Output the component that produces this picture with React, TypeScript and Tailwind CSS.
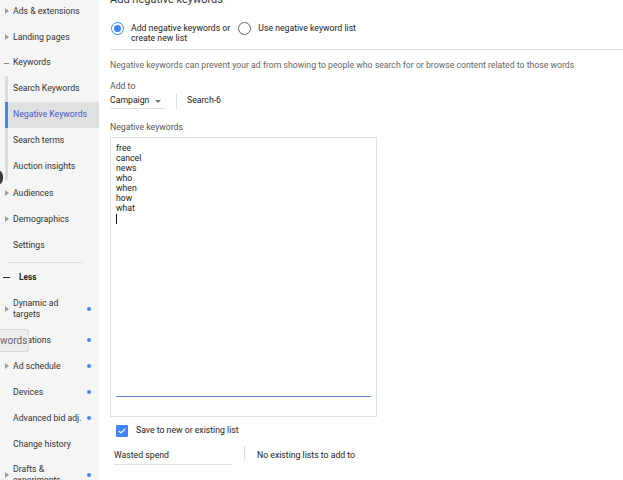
import React from 'react';

const font = { fontFamily: 'Roboto, "Liberation Sans", Arial, sans-serif' };

function Arrow() {
  return (
    <svg width="4" height="6" viewBox="0 0 4 6" className="absolute left-[5px]">
      <path d="M0 0 L4 3 L0 6 Z" fill="#9e9e9e" />
    </svg>
  );
}

function Dot() {
  return <span className="absolute left-[87px] w-[4px] h-[4px] rounded-full bg-[#4285f4]" />;
}

function NavItem({
  label,
  arrow,
  dot,
  tall,
}: {
  label: React.ReactNode;
  arrow?: boolean;
  dot?: boolean;
  tall?: boolean;
}) {
  return (
    <div className={`relative flex items-center ${tall ? 'h-[36px]' : 'h-[26px]'}`}>
      {arrow && <Arrow />}
      <span className="pl-[13px] text-[8.7px] leading-[11px] text-[#333]">{label}</span>
      {dot && <Dot />}
    </div>
  );
}

function Sidebar() {
  return (
    <div className="relative w-[99px] shrink-0 bg-[#f5f5f5] h-[480px] overflow-hidden">
      <div className="-mt-[2px] flex flex-col">
        <NavItem label="Ads & extensions" arrow />
        <NavItem label="Landing pages" arrow />
        <div className="relative flex items-center h-[26px]">
          <span className="absolute left-[4px] w-[5px] h-px bg-[#888]" />
          <span className="pl-[13px] text-[8.7px] text-[#333]">Keywords</span>
        </div>
        <div className="ml-[5px] border-l-[3px] border-[#dcdcdc]">
          <div className="h-[26px] flex items-center pl-[5px] text-[8.7px] text-[#333]">Search Keywords</div>
          <div className="-ml-[3px] h-[26px] flex items-center pl-[5px] text-[8.7px] text-[#4a55d0] bg-[#e0e0e0] border-l-[3px] border-[#4285f4]">
            Negative Keywords
          </div>
          <div className="h-[26px] flex items-center pl-[5px] text-[8.7px] text-[#333]">Search terms</div>
          <div className="h-[26px] flex items-center pl-[5px] text-[8.7px] text-[#333]">Auction insights</div>
        </div>
        <NavItem label="Audiences" arrow />
        <NavItem label="Demographics" arrow />
        <NavItem label="Settings" />
        <div className="mt-[4px] ml-[8px] mr-[16px] h-px bg-[#e0e0e0]" />
        <div className="relative flex items-center h-[28px]">
          <span className="absolute left-[3px] w-[7px] h-px bg-[#222]" />
          <span className="pl-[19px] text-[8.3px] font-bold text-[#222]">Less</span>
        </div>
        <NavItem label={<>Dynamic ad<br />targets</>} arrow dot tall />
        <NavItem label="Locations" dot />
        <NavItem label="Ad schedule" arrow dot />
        <NavItem label="Devices" dot />
        <NavItem label="Advanced bid adj." dot />
        <NavItem label="Change history" />
        <NavItem label={<>Drafts &amp;<br />experiments</>} arrow dot tall />
      </div>
      <div className="absolute left-[-9px] top-[170px] w-[12px] h-[15px] rounded-full bg-[#3a3a3a]" />
      <div className="absolute left-0 top-[329px] w-[29px] h-[23px] bg-[#ededed] border border-l-0 border-[#d8d8d8] rounded-r-[3px] flex items-center overflow-hidden">
        <span className="text-[10px] text-[#666] whitespace-nowrap">words</span>
      </div>
    </div>
  );
}

function Radio({ checked }: { checked?: boolean }) {
  return (
    <span
      className={`shrink-0 w-[13px] h-[13px] rounded-full border-[1.5px] flex items-center justify-center ${
        checked ? 'border-[#4285f4]' : 'border-[#5f6368]'
      }`}
    >
      {checked && <span className="w-[7px] h-[7px] rounded-full bg-[#4285f4]" />}
    </span>
  );
}

function Main() {
  return (
    <div className="flex-1 bg-white h-[480px] overflow-hidden pl-[11px]">
      <div className="-mt-[7px] h-[14px] text-[11px] leading-[14px] text-[#333]">Add negative keywords</div>
      <div className="mt-[15px] flex items-start">
        <div className="ml-[1px] flex items-start">
          <Radio checked />
          <span className="ml-[7px] mt-[1px] text-[8.7px] leading-[10px] text-[#222]">
            Add negative keywords or<br />create new list
          </span>
        </div>
        <div className="ml-[8px] flex items-start">
          <Radio />
          <span className="ml-[7px] mt-[1px] text-[8.7px] leading-[10px] text-[#222]">Use negative keyword list</span>
        </div>
      </div>
      <div className="mt-[6px] h-px bg-[#e0e0e0]" />
      <div className="mt-[10px] text-[8.7px] leading-[11px] text-[#666]">
        Negative keywords can prevent your ad from showing to people who search for or browse content related to those words
      </div>
      <div className="mt-[10px] text-[8.7px] leading-[11px] text-[#555]">Add to</div>
      <div className="mt-[2px] flex items-start">
        <div className="w-[55px] h-[15px] border-b border-[#e0e0e0] flex items-center">
          <span className="text-[8.7px] text-[#222]">Campaign</span>
          <svg width="6" height="3" viewBox="0 0 6 3" className="ml-[6px]">
            <path d="M0 0 L6 0 L3 3 Z" fill="#777" />
          </svg>
        </div>
        <div className="ml-[11px] w-px h-[15px] bg-[#e0e0e0]" />
        <span className="ml-[10px] h-[14px] flex items-center text-[8.7px] text-[#222]">Search-6</span>
      </div>
      <div className="mt-[13px] text-[8.7px] leading-[11px] text-[#555]">Negative keywords</div>
      <div className="mt-[4px] w-[267px] h-[280px] border border-[#e0e0e0] pt-[5px] px-[5px] flex flex-col">
        <div className="text-[8.7px] leading-[10px] text-[#222]">
          free<br />cancel<br />news<br />who<br />when<br />how<br />what
        </div>
        <div className="mt-[1px] w-px h-[10px] bg-[#111]" />
        <div className="mt-auto mb-[19px] h-px bg-[#5d7fc8]" />
      </div>
      <div className="mt-[7px] ml-[6px] flex items-center">
        <span className="w-[12px] h-[12px] rounded-[1px] bg-[#4285f4] flex items-center justify-center">
          <svg width="8" height="6" viewBox="0 0 8 6">
            <path d="M0.8 3 L3 5 L7.2 0.8" stroke="white" strokeWidth="1.2" fill="none" />
          </svg>
        </span>
        <span className="ml-[8px] text-[8.7px] text-[#222]">Save to new or existing list</span>
      </div>
      <div className="mt-[9px] ml-[4px] flex items-start">
        <div className="w-[118px] h-[19px] border-b border-[#e0e0e0] flex items-center">
          <span className="text-[8.7px] text-[#222]">Wasted spend</span>
        </div>
        <div className="ml-[12px] w-px h-[14px] bg-[#f2d4d4]" />
        <span className="ml-[12px] h-[19px] flex items-center text-[8.7px] text-[#222]">No existing lists to add to</span>
      </div>
    </div>
  );
}

export default function App() {
  return (
    <div className="flex w-[623px] h-[480px] overflow-hidden" style={font}>
      <Sidebar />
      <Main />
    </div>
  );
}
